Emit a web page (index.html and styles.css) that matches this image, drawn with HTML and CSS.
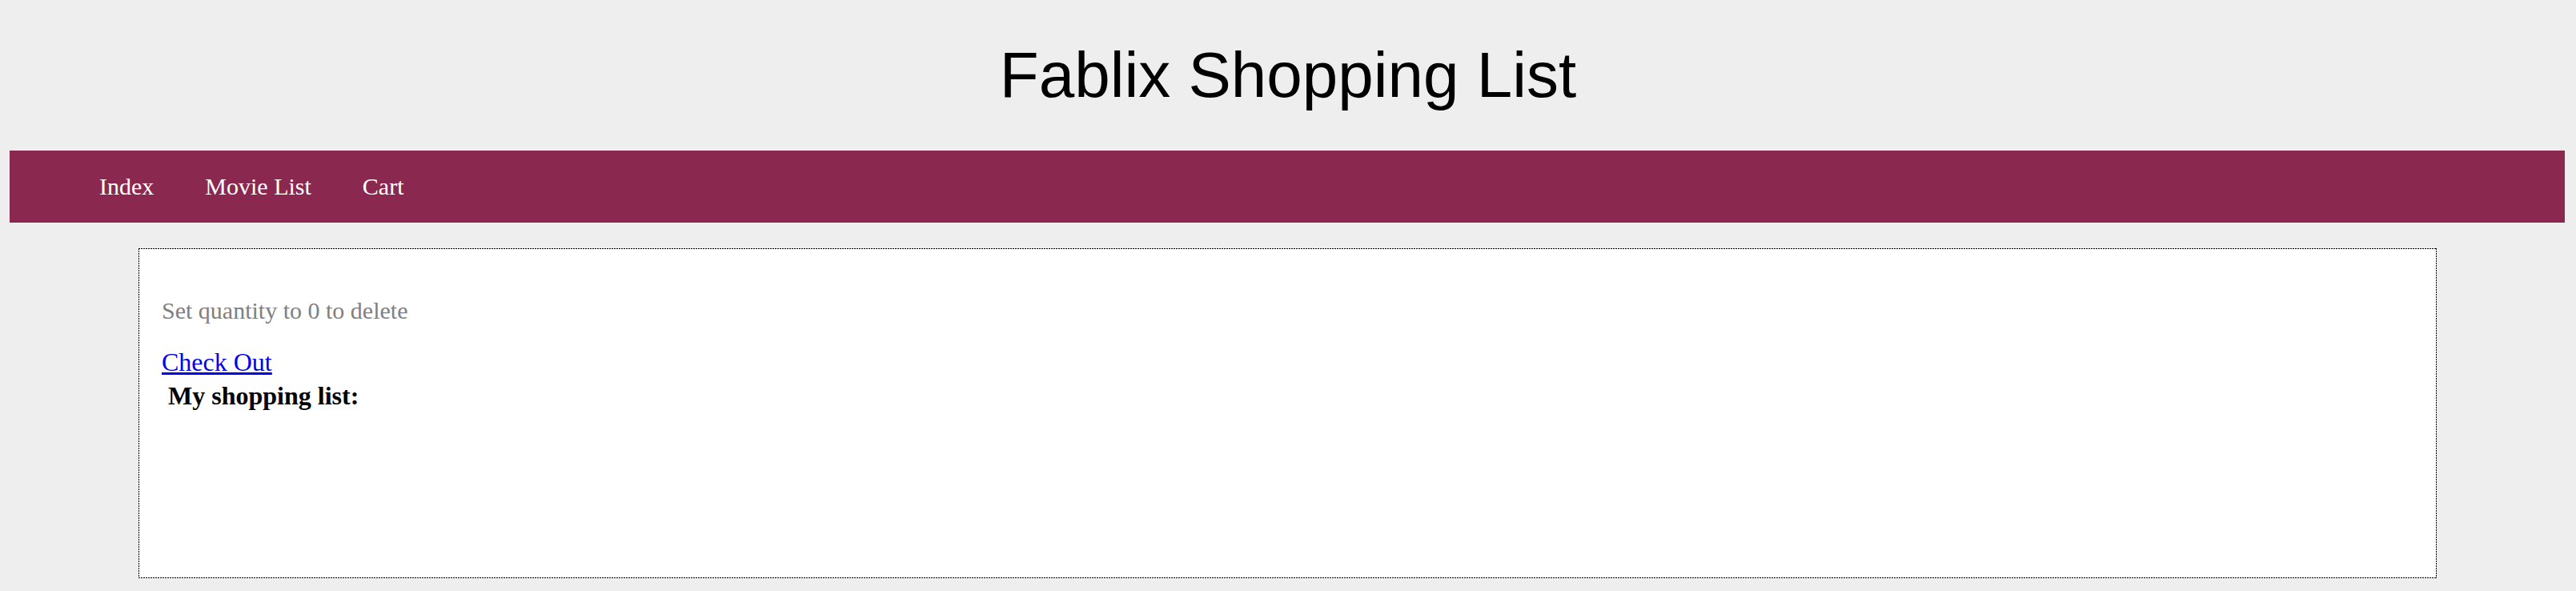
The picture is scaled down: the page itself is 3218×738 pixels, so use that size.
FILE: index.html
```html
<!DOCTYPE html>
<html lang="en">
<head>
<meta charset="utf-8">
<title>Fablix Shopping List</title>
<link rel="stylesheet" href="styles.css">
</head>
<body>
<header class="site-header">
  <h1 class="site-title">Fablix Shopping List</h1>
</header>
<nav class="main-nav">
  <a class="nav-link" href="#">Index</a>
  <a class="nav-link" href="#">Movie List</a>
  <a class="nav-link" href="#">Cart</a>
</nav>
<main class="cart-panel">
  <p class="hint">Set quantity to 0 to delete</p>
  <div class="checkout-row"><a class="checkout" href="#">Check Out</a></div>
  <div class="list-title">My shopping list:</div>
</main>
</body>
</html>
```

FILE: styles.css
```css
html, body {
  margin: 0;
  padding: 0;
}

body {
  background: #eeeeee;
  font-family: "Liberation Serif", "Times New Roman", serif;
  color: #000;
}

.site-header {
  padding-top: 48px;
}

.site-title {
  margin: 0;
  font-family: "Liberation Sans", Arial, sans-serif;
  font-weight: normal;
  font-size: 80px;
  line-height: 92px;
  text-align: center;
  color: #000;
}

.main-nav {
  display: flex;
  align-items: center;
  gap: 64px;
  height: 90px;
  margin: 48px 14px 0 12px;
  padding-left: 112px;
  background: #8b2850;
}

.nav-link {
  color: #ffffff;
  text-decoration: none;
  font-size: 30px;
  line-height: 34px;
}

/* dotted frame drawn as a 2-on / 1-off pattern */
.cart-panel {
  box-sizing: border-box;
  width: 2871px;
  height: 412px;
  margin: 32px 0 0 173px;
  padding: 61px 29px 0 29px;
  background:
    repeating-linear-gradient(90deg, #000 0 2px, transparent 2px 3px) left top / 100% 1px no-repeat,
    repeating-linear-gradient(90deg, #000 0 2px, transparent 2px 3px) left bottom / 100% 1px no-repeat,
    repeating-linear-gradient(180deg, #000 0 2px, transparent 2px 3px) left top / 1px 100% no-repeat,
    repeating-linear-gradient(180deg, #000 0 2px, transparent 2px 3px) right top / 1px 100% no-repeat,
    #ffffff;
}

.hint {
  margin: 0;
  font-size: 30px;
  line-height: 34px;
  color: #808080;
}

.checkout-row {
  margin-top: 29px;
  font-size: 32px;
  line-height: 36px;
}

.checkout {
  color: #0000ee;
  text-decoration: underline;
}

.list-title {
  margin-top: 6px;
  padding-left: 8px;
  font-size: 32px;
  line-height: 36px;
  font-weight: bold;
}
```
